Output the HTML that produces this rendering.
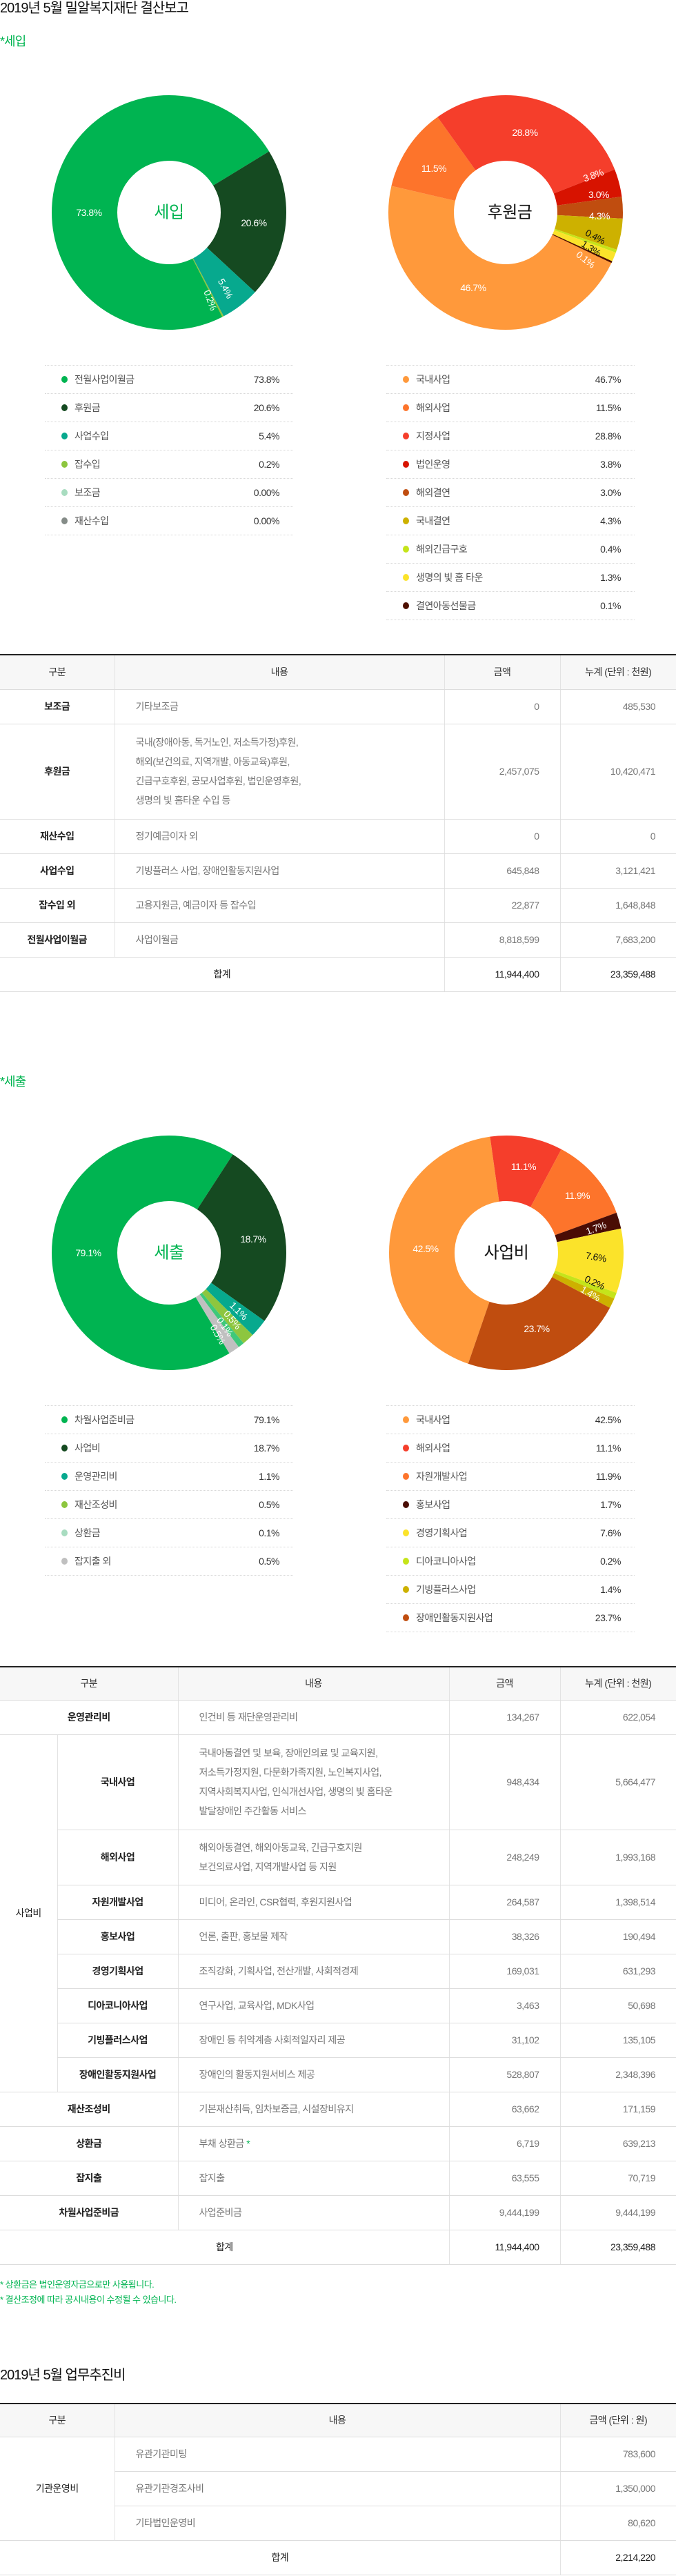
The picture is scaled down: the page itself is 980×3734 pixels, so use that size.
<!DOCTYPE html>
<html lang="ko"><head><meta charset="utf-8">
<style>
*{margin:0;padding:0;box-sizing:border-box}
body{width:980px;height:3734px;position:relative;background:#fff;font-family:"Liberation Sans","Noto Sans CJK KR",sans-serif;color:#333;overflow:hidden}
.abs{position:absolute}
.h1{font-size:20px;color:#111;letter-spacing:-1px;line-height:24px}
.sub{font-size:18px;color:#00b451;letter-spacing:-1px;line-height:22px}
.leg{position:absolute;width:360px}
.leg div{height:41px;border-top:1px dotted #d8d8d8;position:relative;font-size:14px;line-height:40px;color:#555;letter-spacing:-.5px}
.leg div:last-child{border-bottom:1px dotted #d8d8d8;height:42px}
.leg i{position:absolute;left:24px;top:15px;width:9px;height:10px;border-radius:50%}
.leg span{position:absolute;left:43px}
.leg b{position:absolute;right:20px;font-weight:400;color:#333}
table{position:absolute;left:0;width:980px;border-collapse:collapse;table-layout:fixed;border-top:2px solid #222;font-size:14px;letter-spacing:-.5px}
th{background:#f7f7f7;font-weight:400;color:#333;border-bottom:1px solid #ddd;border-left:1px solid #e3e3e3}
td{border-bottom:1px solid #ddd;border-left:1px solid #e3e3e3;color:#777;line-height:28px}
th:first-child,td.f{border-left:none}
td.l{text-align:center;color:#222;font-weight:700}
td.c{padding-left:30px}
td.n{text-align:right;padding-right:30px}
tr.sum td{color:#222;text-align:center}
tr.sum td.n{text-align:right}
svg text{font-family:"Liberation Sans","Noto Sans CJK KR",sans-serif;font-size:14px;letter-spacing:-.5px}
.note{font-size:13px;color:#00b451;letter-spacing:-.5px;line-height:22px}
</style></head><body>

<div class="abs h1" style="left:0;top:0">2019년 5월 밀알복지재단 결산보고</div>
<div class="abs sub" style="left:0;top:49px">*세입</div>

<svg class="abs" style="left:0;top:138px" width="980" height="340" viewBox="0 0 980 340">
<g fill="none" stroke-width="95">
<circle cx="245" cy="170" r="122.5" pathLength="360" transform="rotate(-90 245 170)" stroke="#00b451" stroke-dasharray="265.7 94.3" stroke-dashoffset="-152.9"/>
<circle cx="245" cy="170" r="122.5" pathLength="360" transform="rotate(-90 245 170)" stroke="#154a21" stroke-dasharray="74.2 285.8" stroke-dashoffset="-58.6"/>
<circle cx="245" cy="170" r="122.5" pathLength="360" transform="rotate(-90 245 170)" stroke="#07a98e" stroke-dasharray="19.4 340.6" stroke-dashoffset="-132.8"/>
<circle cx="245" cy="170" r="122.5" pathLength="360" transform="rotate(-90 245 170)" stroke="#8dc63f" stroke-dasharray="0.8 359.2" stroke-dashoffset="-152.2"/>

<circle cx="733" cy="170" r="122.5" pathLength="360" transform="rotate(-90 733 170)" stroke="#ff993b" stroke-dasharray="168.1 191.9" stroke-dashoffset="-115"/>
<circle cx="733" cy="170" r="122.5" pathLength="360" transform="rotate(-90 733 170)" stroke="#fd742b" stroke-dasharray="41.4 318.6" stroke-dashoffset="-283.1"/>
<circle cx="733" cy="170" r="122.5" pathLength="360" transform="rotate(-90 733 170)" stroke="#f53e2b" stroke-dasharray="104 256" stroke-dashoffset="-324.5"/>
<circle cx="733" cy="170" r="122.5" pathLength="360" transform="rotate(-90 733 170)" stroke="#d71300" stroke-dasharray="13.7 346.3" stroke-dashoffset="-68.5"/>
<circle cx="733" cy="170" r="122.5" pathLength="360" transform="rotate(-90 733 170)" stroke="#c04d0f" stroke-dasharray="10.8 349.2" stroke-dashoffset="-82.2"/>
<circle cx="733" cy="170" r="122.5" pathLength="360" transform="rotate(-90 733 170)" stroke="#cdb100" stroke-dasharray="15.5 344.5" stroke-dashoffset="-93"/>
<circle cx="733" cy="170" r="122.5" pathLength="360" transform="rotate(-90 733 170)" stroke="#c5e41a" stroke-dasharray="1.5 358.5" stroke-dashoffset="-108.5"/>
<circle cx="733" cy="170" r="122.5" pathLength="360" transform="rotate(-90 733 170)" stroke="#fbe32a" stroke-dasharray="4.7 355.3" stroke-dashoffset="-110"/>
<circle cx="733" cy="170" r="122.5" pathLength="360" transform="rotate(-90 733 170)" stroke="#4d0f00" stroke-dasharray="0.9 359.1" stroke-dashoffset="-114.6"/>
</g>
<g fill="#fff" text-anchor="middle" dominant-baseline="central">
<text x="129" y="170">73.8%</text>
<text x="368" y="185">20.6%</text>
<text x="327" y="280" transform="rotate(62 327 280)">5.4%</text>
<text x="305" y="297" transform="rotate(70 305 297)">0.2%</text>
<text x="245" y="170" fill="#00b451" style="font-size:24px">세입</text>
<text x="761" y="54">28.8%</text>
<text x="629" y="106">11.5%</text>
<text x="860" y="116" transform="rotate(-20 860 116)">3.8%</text>
<text x="868" y="144">3.0%</text>
<text x="869" y="175">4.3%</text>
<text x="863" y="205" fill="#111" transform="rotate(28 863 205)">0.4%</text>
<text x="857" y="222" fill="#111" transform="rotate(32 857 222)">1.3%</text>
<text x="849" y="238" transform="rotate(38 849 238)">0.1%</text>
<text x="686" y="279">46.7%</text>
<text x="739" y="170" fill="#111" style="font-size:24px">후원금</text>
</g>
</svg>

<div class="leg" style="left:65px;top:529px">
<div><i style="background:#00b451"></i><span>전월사업이월금</span><b>73.8%</b></div>
<div><i style="background:#154a21"></i><span>후원금</span><b>20.6%</b></div>
<div><i style="background:#07a98e"></i><span>사업수입</span><b>5.4%</b></div>
<div><i style="background:#8dc63f"></i><span>잡수입</span><b>0.2%</b></div>
<div><i style="background:#a8dcc0"></i><span>보조금</span><b>0.00%</b></div>
<div><i style="background:#858c88"></i><span>재산수입</span><b>0.00%</b></div>
</div>
<div class="leg" style="left:560px;top:529px">
<div><i style="background:#ff993b"></i><span>국내사업</span><b>46.7%</b></div>
<div><i style="background:#fd742b"></i><span>해외사업</span><b>11.5%</b></div>
<div><i style="background:#f53e2b"></i><span>지정사업</span><b>28.8%</b></div>
<div><i style="background:#d71300"></i><span>법인운영</span><b>3.8%</b></div>
<div><i style="background:#c04d0f"></i><span>해외결연</span><b>3.0%</b></div>
<div><i style="background:#cdb100"></i><span>국내결연</span><b>4.3%</b></div>
<div><i style="background:#c5e41a"></i><span>해외긴급구호</span><b>0.4%</b></div>
<div><i style="background:#fbe32a"></i><span>생명의 빛 홈 타운</span><b>1.3%</b></div>
<div><i style="background:#4d0f00"></i><span>결연아동선물금</span><b>0.1%</b></div>
</div>

<table style="top:948px">
<colgroup><col style="width:166px"><col style="width:478px"><col style="width:168px"><col style="width:168px"></colgroup>
<tr style="height:50px"><th>구분</th><th>내용</th><th>금액</th><th>누계 (단위 : 천원)</th></tr>
<tr style="height:50px"><td class="f l">보조금</td><td class="c">기타보조금</td><td class="n">0</td><td class="n">485,530</td></tr>
<tr style="height:138px"><td class="f l">후원금</td><td class="c">국내(장애아동, 독거노인, 저소득가정)후원,<br>해외(보건의료, 지역개발, 아동교육)후원,<br>긴급구호후원, 공모사업후원, 법인운영후원,<br>생명의 빛 홈타운 수입 등</td><td class="n">2,457,075</td><td class="n">10,420,471</td></tr>
<tr style="height:50px"><td class="f l">재산수입</td><td class="c">정기예금이자 외</td><td class="n">0</td><td class="n">0</td></tr>
<tr style="height:50px"><td class="f l">사업수입</td><td class="c">기빙플러스 사업, 장애인활동지원사업</td><td class="n">645,848</td><td class="n">3,121,421</td></tr>
<tr style="height:50px"><td class="f l">잡수입 외</td><td class="c">고용지원금, 예금이자 등 잡수입</td><td class="n">22,877</td><td class="n">1,648,848</td></tr>
<tr style="height:50px"><td class="f l">전월사업이월금</td><td class="c">사업이월금</td><td class="n">8,818,599</td><td class="n">7,683,200</td></tr>
<tr class="sum" style="height:50px"><td class="f" colspan="2">합계</td><td class="n">11,944,400</td><td class="n">23,359,488</td></tr>
</table>

<div class="abs sub" style="left:0;top:1557px">*세출</div>

<svg class="abs" style="left:0;top:1646px" width="980" height="340" viewBox="0 0 980 340">
<g fill="none" stroke-width="95">
<circle cx="245" cy="170" r="122.5" pathLength="360" transform="rotate(-90 245 170)" stroke="#00b451" stroke-dasharray="244 116" stroke-dashoffset="-149"/>
<circle cx="245" cy="170" r="122.5" pathLength="360" transform="rotate(-90 245 170)" stroke="#154a21" stroke-dasharray="92.5 267.5" stroke-dashoffset="-33"/>
<circle cx="245" cy="170" r="122.5" pathLength="360" transform="rotate(-90 245 170)" stroke="#07a98e" stroke-dasharray="9 351" stroke-dashoffset="-125.5"/>
<circle cx="245" cy="170" r="122.5" pathLength="360" transform="rotate(-90 245 170)" stroke="#8dc63f" stroke-dasharray="6 354" stroke-dashoffset="-134.5"/>
<circle cx="245" cy="170" r="122.5" pathLength="360" transform="rotate(-90 245 170)" stroke="#3ec87a" stroke-dasharray="3 357" stroke-dashoffset="-140.5"/>
<circle cx="245" cy="170" r="122.5" pathLength="360" transform="rotate(-90 245 170)" stroke="#c0c0c0" stroke-dasharray="5.5 354.5" stroke-dashoffset="-143.5"/>

<circle cx="734" cy="170" r="122.5" pathLength="360" transform="rotate(-90 734 170)" stroke="#ff993b" stroke-dasharray="153 207" stroke-dashoffset="-199"/>
<circle cx="734" cy="170" r="122.5" pathLength="360" transform="rotate(-90 734 170)" stroke="#f53e2b" stroke-dasharray="36 324" stroke-dashoffset="-352"/>
<circle cx="734" cy="170" r="122.5" pathLength="360" transform="rotate(-90 734 170)" stroke="#fd742b" stroke-dasharray="42 318" stroke-dashoffset="-28"/>
<circle cx="734" cy="170" r="122.5" pathLength="360" transform="rotate(-90 734 170)" stroke="#4a0d05" stroke-dasharray="8 352" stroke-dashoffset="-70"/>
<circle cx="734" cy="170" r="122.5" pathLength="360" transform="rotate(-90 734 170)" stroke="#fbe32a" stroke-dasharray="32 328" stroke-dashoffset="-78"/>
<circle cx="734" cy="170" r="122.5" pathLength="360" transform="rotate(-90 734 170)" stroke="#c5e41a" stroke-dasharray="3 357" stroke-dashoffset="-110"/>
<circle cx="734" cy="170" r="122.5" pathLength="360" transform="rotate(-90 734 170)" stroke="#cdb100" stroke-dasharray="5 355" stroke-dashoffset="-113"/>
<circle cx="734" cy="170" r="122.5" pathLength="360" transform="rotate(-90 734 170)" stroke="#c04d0f" stroke-dasharray="81 279" stroke-dashoffset="-118"/>
</g>
<g fill="#fff" text-anchor="middle" dominant-baseline="central">
<text x="128" y="170">79.1%</text>
<text x="367" y="150">18.7%</text>
<text x="346" y="254" transform="rotate(45 346 254)">1.1%</text>
<text x="337" y="267" transform="rotate(50 337 267)">0.5%</text>
<text x="326" y="277" transform="rotate(55 326 277)">0.1%</text>
<text x="316" y="288" transform="rotate(60 316 288)">0.5%</text>
<text x="245" y="170" fill="#00b451" style="font-size:24px">세출</text>
<text x="759" y="45">11.1%</text>
<text x="837" y="87">11.9%</text>
<text x="864" y="134" transform="rotate(-20 864 134)">1.7%</text>
<text x="864" y="176" fill="#111" transform="rotate(10 864 176)">7.6%</text>
<text x="862" y="213" fill="#111" transform="rotate(25 862 213)">0.2%</text>
<text x="856" y="229" transform="rotate(30 856 229)">1.4%</text>
<text x="778" y="280">23.7%</text>
<text x="617" y="164">42.5%</text>
<text x="734" y="170" fill="#111" style="font-size:24px">사업비</text>
</g>
</svg>

<div class="leg" style="left:65px;top:2037px">
<div><i style="background:#00b451"></i><span>차월사업준비금</span><b>79.1%</b></div>
<div><i style="background:#154a21"></i><span>사업비</span><b>18.7%</b></div>
<div><i style="background:#07a98e"></i><span>운영관리비</span><b>1.1%</b></div>
<div><i style="background:#8dc63f"></i><span>재산조성비</span><b>0.5%</b></div>
<div><i style="background:#a8dcc0"></i><span>상환금</span><b>0.1%</b></div>
<div><i style="background:#c0c0c0"></i><span>잡지출 외</span><b>0.5%</b></div>
</div>
<div class="leg" style="left:560px;top:2037px">
<div><i style="background:#ff993b"></i><span>국내사업</span><b>42.5%</b></div>
<div><i style="background:#f53e2b"></i><span>해외사업</span><b>11.1%</b></div>
<div><i style="background:#fd742b"></i><span>자원개발사업</span><b>11.9%</b></div>
<div><i style="background:#4a0d05"></i><span>홍보사업</span><b>1.7%</b></div>
<div><i style="background:#fbe32a"></i><span>경영기획사업</span><b>7.6%</b></div>
<div><i style="background:#c5e41a"></i><span>디아코니아사업</span><b>0.2%</b></div>
<div><i style="background:#cdb100"></i><span>기빙플러스사업</span><b>1.4%</b></div>
<div><i style="background:#c04d0f"></i><span>장애인활동지원사업</span><b>23.7%</b></div>
</div>

<table style="top:2415px">
<colgroup><col style="width:83px"><col style="width:175px"><col style="width:393px"><col style="width:161px"><col style="width:168px"></colgroup>
<tr style="height:48px"><th colspan="2">구분</th><th>내용</th><th>금액</th><th>누계 (단위 : 천원)</th></tr>
<tr style="height:50px"><td class="f l" colspan="2">운영관리비</td><td class="c">인건비 등 재단운영관리비</td><td class="n">134,267</td><td class="n">622,054</td></tr>
<tr style="height:138px"><td class="f l" rowspan="8" style="font-weight:400;color:#222">사업비</td><td class="l">국내사업</td><td class="c">국내아동결연 및 보육, 장애인의료 및 교육지원,<br>저소득가정지원, 다문화가족지원, 노인복지사업,<br>지역사회복지사업, 인식개선사업, 생명의 빛 홈타운<br>발달장애인 주간활동 서비스</td><td class="n">948,434</td><td class="n">5,664,477</td></tr>
<tr style="height:80px"><td class="l">해외사업</td><td class="c">해외아동결연, 해외아동교육, 긴급구호지원<br>보건의료사업, 지역개발사업 등 지원</td><td class="n">248,249</td><td class="n">1,993,168</td></tr>
<tr style="height:50px"><td class="l">자원개발사업</td><td class="c">미디어, 온라인, CSR협력, 후원지원사업</td><td class="n">264,587</td><td class="n">1,398,514</td></tr>
<tr style="height:50px"><td class="l">홍보사업</td><td class="c">언론, 출판, 홍보물 제작</td><td class="n">38,326</td><td class="n">190,494</td></tr>
<tr style="height:50px"><td class="l">경영기획사업</td><td class="c">조직강화, 기획사업, 전산개발, 사회적경제</td><td class="n">169,031</td><td class="n">631,293</td></tr>
<tr style="height:50px"><td class="l">디아코니아사업</td><td class="c">연구사업, 교육사업, MDK사업</td><td class="n">3,463</td><td class="n">50,698</td></tr>
<tr style="height:50px"><td class="l">기빙플러스사업</td><td class="c">장애인 등 취약계층 사회적일자리 제공</td><td class="n">31,102</td><td class="n">135,105</td></tr>
<tr style="height:50px"><td class="l">장애인활동지원사업</td><td class="c">장애인의 활동지원서비스 제공</td><td class="n">528,807</td><td class="n">2,348,396</td></tr>
<tr style="height:50px"><td class="f l" colspan="2">재산조성비</td><td class="c">기본재산취득, 임차보증금, 시설장비유지</td><td class="n">63,662</td><td class="n">171,159</td></tr>
<tr style="height:50px"><td class="f l" colspan="2">상환금</td><td class="c">부채 상환금 <span style="color:#00b451">*</span></td><td class="n">6,719</td><td class="n">639,213</td></tr>
<tr style="height:50px"><td class="f l" colspan="2">잡지출</td><td class="c">잡지출</td><td class="n">63,555</td><td class="n">70,719</td></tr>
<tr style="height:50px"><td class="f l" colspan="2">차월사업준비금</td><td class="c">사업준비금</td><td class="n">9,444,199</td><td class="n">9,444,199</td></tr>
<tr class="sum" style="height:50px"><td class="f" colspan="3">합계</td><td class="n">11,944,400</td><td class="n">23,359,488</td></tr>
</table>

<div class="abs note" style="left:0;top:3301px">* 상환금은 법인운영자금으로만 사용됩니다.</div>
<div class="abs note" style="left:0;top:3323px">* 결산조정에 따라 공시내용이 수정될 수 있습니다.</div>

<div class="abs h1" style="left:0;top:3431px">2019년 5월 업무추진비</div>

<table style="top:3483px">
<colgroup><col style="width:166px"><col style="width:646px"><col style="width:168px"></colgroup>
<tr style="height:48px"><th>구분</th><th>내용</th><th>금액 (단위 : 원)</th></tr>
<tr style="height:50px"><td class="f" rowspan="3" style="text-align:center;color:#222">기관운영비</td><td class="c">유관기관미팅</td><td class="n">783,600</td></tr>
<tr style="height:50px"><td class="c">유관기관경조사비</td><td class="n">1,350,000</td></tr>
<tr style="height:50px"><td class="c">기타법인운영비</td><td class="n">80,620</td></tr>
<tr class="sum" style="height:50px"><td class="f" colspan="2">합계</td><td class="n">2,214,220</td></tr>
</table>

</body></html>
